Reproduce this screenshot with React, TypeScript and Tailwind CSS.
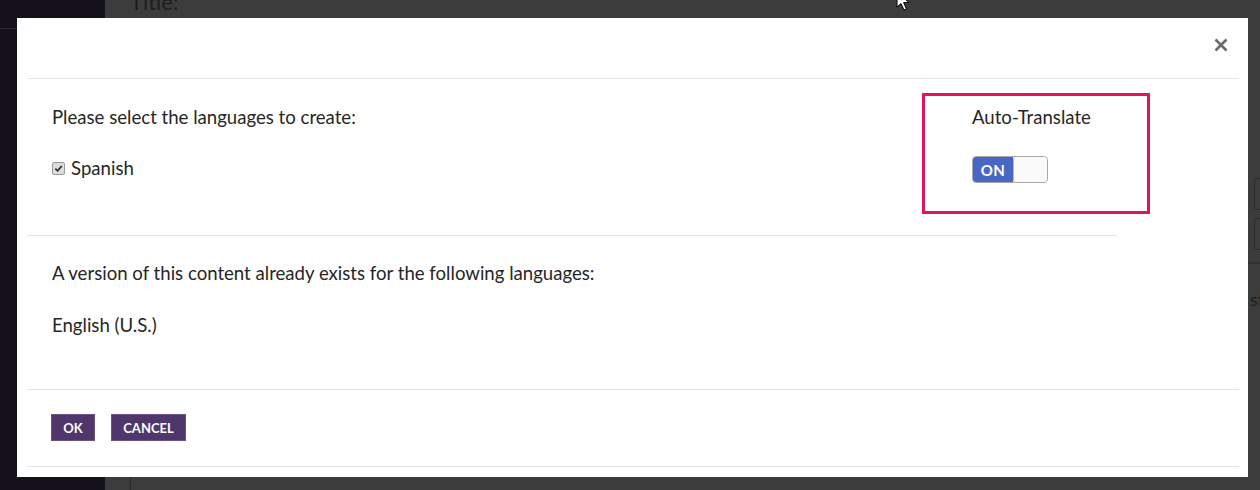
import React from 'react'

const font = { fontFamily: 'Lato, "Open Sans", sans-serif' }

function Divider({ w }: { w: string }) {
  return <div className={`${w} h-px bg-[#e4e4e4] ml-[10px]`} />
}

function CheckedBox() {
  return (
    <span className="inline-flex items-center justify-center w-[13px] h-[13px] rounded-[2px] border border-[#9a9a9a] bg-[#dcdcdc]">
      <svg width="9" height="9" viewBox="0 0 10 10">
        <path d="M1.5 5.2 L4 7.6 L8.6 2.2" fill="none" stroke="#2a2a2a" strokeWidth="1.9" />
      </svg>
    </span>
  )
}

function Toggle() {
  return (
    <div className="flex w-[76px] h-[27px] rounded-[4px] border border-[#a9a9a9] overflow-hidden">
      <div className="w-[40px] bg-[#4a66c4] text-white text-[15px] font-bold flex items-center justify-center tracking-[0.5px]">ON</div>
      <div className="flex-1 bg-[#fafafa] border-l border-[#b5b5b5] rounded-[3px]" />
    </div>
  )
}

export default function App() {
  return (
    <div className="relative w-[1260px] h-[490px] overflow-hidden flex" style={font}>
      {/* page behind the overlay */}
      <div className="w-[105px] h-full bg-[#14111a] relative">
        <div className="absolute left-0 right-0 top-[28px] h-px bg-[#2a2830]" />
      </div>
      <div className="flex-1 h-full bg-[#3c3c3c] relative">
        <div className="absolute left-[25px] top-[476px] bottom-0 w-px bg-[#2a2a2a]" />
        <div className="absolute left-[25px] top-[-15px] text-[22px] text-[#1e1e1e]">Title:</div>
        <div className="absolute right-[-6px] top-[178px] w-[12px] h-[32px] rounded-[3px] border border-[#2c2c2c]" />
        <div className="absolute right-[-6px] top-[218px] w-[12px] h-[32px] rounded-[3px] border border-[#2c2c2c]" />
        <div className="absolute right-0 top-[262px] w-[12px] h-[2px] bg-[#333]" />
        <div className="absolute left-[1145px] top-[286px] text-[18px] text-[#1e1e1e]">sti</div>
      </div>

      {/* cursor */}
      <svg className="absolute left-[896px] top-[-9px]" width="16" height="22" viewBox="0 0 16 22">
        <path d="M1 1 L1 16 L5 12.5 L8 19 L10.5 18 L7.6 11.6 L13 11.6 Z" fill="#fff" stroke="#000" strokeWidth="1" />
      </svg>

      {/* modal */}
      <div className="absolute left-[17px] top-[18px] w-[1231px] h-[459px] bg-white text-[#262626] text-[18.6px] leading-[24px]">
        <div className="h-[60px] relative">
          <svg className="absolute left-[1197px] top-[20px]" width="14" height="14" viewBox="0 0 14 14">
            <path d="M1.5 1.5 L12.5 12.5 M12.5 1.5 L1.5 12.5" stroke="#6a6a6a" strokeWidth="2.6" />
          </svg>
        </div>
        <Divider w="w-[1212px]" />

        <div className="flex">
          <div className="w-[905px] pl-[35px] pt-[26px]">
            <p>Please select the languages to create:</p>
            <label className="flex items-center gap-[6px] mt-[27px]">
              <CheckedBox />
              <span>Spanish</span>
            </label>
          </div>
          <div className="mt-[14px] mb-[21px] w-[228px] h-[121px] border-[3px] border-[#e8125c] pl-[47px] pt-[9px]">
            <p>Auto-Translate</p>
            <div className="mt-[27px]">
              <Toggle />
            </div>
          </div>
        </div>
        <Divider w="w-[1090px]" />

        <div className="pl-[35px] pt-[25px] pb-[52px]">
          <p>A version of this content already exists for the following languages:</p>
          <p className="mt-[28px]">English (U.S.)</p>
        </div>
        <Divider w="w-[1212px]" />

        <div className="flex gap-[16px] pl-[34px] pt-[24px] pb-[25px]">
          <button className="w-[44px] h-[27px] bg-[#4f376b] border border-[#6a5285] text-white text-[13px] font-bold">OK</button>
          <button className="w-[75px] h-[27px] bg-[#4f376b] border border-[#6a5285] text-white text-[13px] font-bold">CANCEL</button>
        </div>
        <Divider w="w-[1212px]" />
      </div>
    </div>
  )
}
